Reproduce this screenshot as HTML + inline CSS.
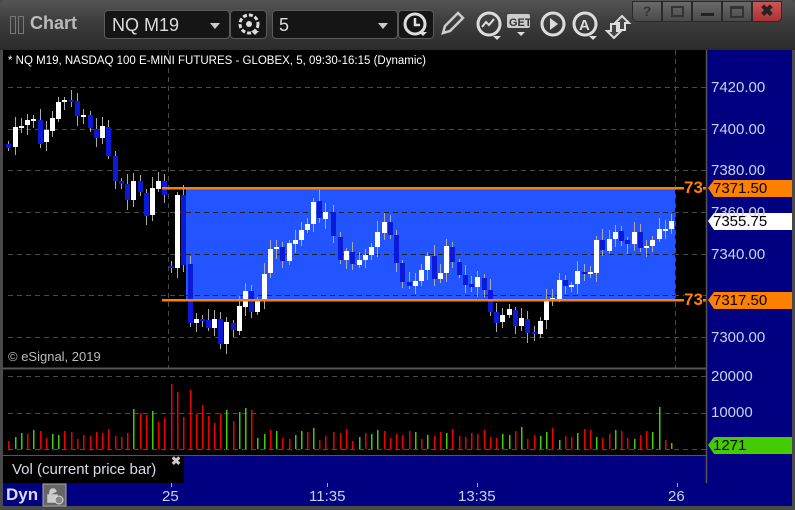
<!DOCTYPE html>
<html><head><meta charset="utf-8"><style>
*{margin:0;padding:0;box-sizing:border-box}
body{width:795px;height:510px;overflow:hidden;background:#4a4a4a;font-family:"Liberation Sans",sans-serif;position:relative}
.abs{position:absolute}
#title{left:0;top:0;width:795px;height:50px;background:linear-gradient(#555 0,#3e3e3e 20px,#2a2a2a 50px);border-radius:6px 6px 0 0}
.dd{background:#151515;border:1px solid #5a5a5a;border-radius:4px;color:#ddd;font-size:18px}
.wb{top:1px;height:21px;background:linear-gradient(#6a6a6a,#4a4a4a);border:1px solid #2a2a2a;color:#222;font-weight:bold;text-align:center;font-size:14px;line-height:19px}
.pl{color:#c9d2ec;font-size:15px;left:711px}
.tl{color:#c9d2ec;font-size:15px;top:488px}
</style></head><body>
<div id="title" class="abs"></div>
<div class="abs" style="left:10px;top:16px;width:6px;height:18px;border:1px solid #777"></div>
<div class="abs" style="left:18px;top:16px;width:6px;height:18px;border:1px solid #777"></div>
<div class="abs" style="left:30px;top:13px;color:#bbb;font-weight:bold;font-size:18px">Chart</div>
<div class="abs dd" style="left:104px;top:10px;width:126px;height:29px;padding:4px 0 0 7px">NQ M19<span style="position:absolute;right:9px;top:12px;border:5px solid transparent;border-top:6px solid #ccc"></span></div>
<div class="abs dd" style="left:230px;top:10px;width:37px;height:29px"><svg width="35" height="27"><circle cx="18" cy="13" r="9" fill="none" stroke="#ddd" stroke-width="3" stroke-dasharray="4 2"/><circle cx="18" cy="13" r="3" fill="#ddd"/><path d="M20 20h8l-4 4z" fill="#ddd"/></svg></div>
<div class="abs dd" style="left:272px;top:10px;width:126px;height:29px;padding:4px 0 0 6px">5<span style="position:absolute;right:9px;top:12px;border:5px solid transparent;border-top:6px solid #ccc"></span></div>
<div class="abs dd" style="left:398px;top:10px;width:36px;height:29px"><svg width="34" height="27"><circle cx="16" cy="13" r="10" fill="none" stroke="#ddd" stroke-width="3"/><path d="M16 7v7h5" fill="none" stroke="#ddd" stroke-width="2.5"/><path d="M20 21h8l-4 4z" fill="#ddd"/></svg></div>
<svg class="abs" style="left:436px;top:8px" width="200" height="34">
<path d="M7 25l2-7 13-13 5 5-13 13z" fill="none" stroke="#ccc" stroke-width="2.5"/>
<circle cx="53" cy="16" r="11" fill="none" stroke="#ddd" stroke-width="3"/><path d="M46 19l4-5 3 3 5-6" fill="none" stroke="#ddd" stroke-width="2"/><path d="M57 28h8l-4 4z" fill="#ddd"/>
<rect x="71" y="6" width="23" height="14" rx="2" fill="#ccc"/><text x="73" y="18" font-size="11" font-weight="bold" fill="#333" font-family="Liberation Sans">GET</text><path d="M81 24h8l-4 4z" fill="#ddd"/>
<circle cx="117" cy="16" r="11" fill="none" stroke="#ddd" stroke-width="3"/><path d="M114 10v12l8-6z" fill="#ddd"/>
<circle cx="149" cy="16" r="11" fill="none" stroke="#ddd" stroke-width="3"/><text x="143" y="22" font-size="15" font-weight="bold" fill="#ddd" font-family="Liberation Sans">A</text><path d="M153 28h8l-4 4z" fill="#ddd"/>
<path d="M178 30l-7-7h4v-7h6v7h4z M186 8l7 7h-4v7h-6v-7h-4z" fill="#444" stroke="#ddd" stroke-width="2"/>
</svg>
<div class="abs wb" style="left:632px;width:30px;border-radius:0 0 0 5px;color:#333">?</div>
<div class="abs wb" style="left:662px;width:30px"><div style="margin:4px auto;width:13px;height:11px;border:2px solid #333;border-top-width:2px"></div></div>
<div class="abs wb" style="left:692px;width:30px"><div style="margin:11px auto 0;width:13px;height:3px;background:#222"></div></div>
<div class="abs wb" style="left:722px;width:30px"><div style="margin:4px auto;width:14px;height:12px;border:2px solid #333;border-top-width:3px"></div></div>
<div class="abs wb" style="left:752px;width:30px;background:linear-gradient(#c55,#a33);border-radius:0 0 5px 0;font-size:16px">✖</div>

<div class="abs" style="left:3px;top:50px;width:703px;height:405px;background:#000"></div>
<div class="abs" style="left:706px;top:50px;width:86px;height:456px;background:#000080"></div>
<div class="abs" style="left:184px;top:455px;width:522px;height:28px;background:#000080"></div>
<div class="abs" style="left:3px;top:483px;width:789px;height:23px;background:#000080"></div>
<div class="abs" style="left:3px;top:455px;width:181px;height:28px;background:#000"></div>
<svg class="abs" style="left:0;top:0" width="795" height="510" id="sv">
<g stroke="#4a4a4a" stroke-dasharray="5 4" stroke-width="1">
<line x1="8" y1="87.5" x2="706" y2="87.5"/><line x1="8" y1="129.5" x2="706" y2="129.5"/><line x1="8" y1="170.5" x2="706" y2="170.5"/><line x1="8" y1="212.5" x2="706" y2="212.5"/><line x1="8" y1="254.5" x2="706" y2="254.5"/><line x1="8" y1="295.5" x2="706" y2="295.5"/><line x1="8" y1="337.5" x2="706" y2="337.5"/>
<line x1="8" y1="376.5" x2="706" y2="376.5"/><line x1="8" y1="413.5" x2="706" y2="413.5"/><line x1="8" y1="449.5" x2="706" y2="449.5"/>
<line x1="168.5" y1="50" x2="168.5" y2="368"/><line x1="675.5" y1="50" x2="675.5" y2="368"/>
</g>
<rect x="186" y="188" width="489" height="112" fill="#2255ff"/>
<g stroke="#222" stroke-dasharray="5 4"><line x1="186" y1="212.5" x2="675" y2="212.5"/><line x1="186" y1="254.5" x2="675" y2="254.5"/><line x1="186" y1="295.5" x2="675" y2="295.5"/></g>
<g id="cd"></g><g id="vb"></g>
<rect x="162" y="187" width="544" height="2.5" fill="#ff8000"/>
<rect x="162" y="299" width="544" height="2.5" fill="#ff8000"/>
<line x1="3" y1="368.5" x2="706" y2="368.5" stroke="#555" stroke-width="2"/>
<line x1="706.5" y1="50" x2="706.5" y2="483" stroke="#555" stroke-width="1.5"/>
<line x1="3" y1="455.5" x2="706" y2="455.5" stroke="#555"/>
<path d="M708 188l6-8h78v17h-78z" fill="#ff8000"/>
<path d="M708 221l6-8h78v17h-78z" fill="#fff"/>
<path d="M708 300l6-8h78v17h-78z" fill="#ff8000"/>
<path d="M708 445l6-8h78v17h-78z" fill="#44cc00"/>
<line x1="171.5" y1="483" x2="171.5" y2="487" stroke="#aaa"/><line x1="327.5" y1="483" x2="327.5" y2="487" stroke="#aaa"/><line x1="477.5" y1="483" x2="477.5" y2="487" stroke="#aaa"/><line x1="677.5" y1="483" x2="677.5" y2="487" stroke="#aaa"/>
<rect x="43" y="484" width="23" height="22" fill="#666" stroke="#aaa"/>
<path d="M48 502v-7h9v7z M50 495v-3a3 3 0 0 1 6 0" fill="#ccc" stroke="#ccc" stroke-width="1.5"/>
<circle cx="59" cy="500" r="4" fill="#888" stroke="#ddd"/>
</svg>
<div class="abs" style="left:8px;top:55px;color:#fff;font-size:11.5px">* NQ M19, NASDAQ 100 E-MINI FUTURES - GLOBEX, 5, 09:30-16:15 (Dynamic)</div>
<div class="abs" style="left:8px;top:349px;color:#bbb;font-size:13px">© eSignal, 2019</div>
<div class="abs pl" style="top:79px">7420.00</div>
<div class="abs pl" style="top:121px">7400.00</div>
<div class="abs pl" style="top:162px">7380.00</div>
<div class="abs pl" style="top:204px">7360.00</div>
<div class="abs pl" style="top:246px">7340.00</div>
<div class="abs pl" style="top:329px">7300.00</div>
<div class="abs pl" style="top:368px">20000</div>
<div class="abs pl" style="top:404px">10000</div>
<div class="abs" style="left:713px;top:180px;color:#000;font-size:15px">7371.50</div>
<div class="abs" style="left:713px;top:213px;color:#000;font-size:15px">7355.75</div>
<div class="abs" style="left:713px;top:292px;color:#000;font-size:15px">7317.50</div>
<div class="abs" style="left:713px;top:437px;color:#000;font-size:15px">1271</div>
<div class="abs" style="left:684px;top:179px;color:#ff8000;font-size:17px;font-weight:bold;background:#000;line-height:18px">73</div>
<div class="abs" style="left:684px;top:291px;color:#ff8000;font-size:17px;font-weight:bold;background:#000;line-height:18px">73</div>
<div class="abs" style="left:12px;top:461px;color:#d8dce8;font-size:15px">Vol (current price bar)</div>
<div class="abs" style="left:171px;top:454px;color:#ccc;font-size:12px;font-weight:bold">✖</div>
<div class="abs" style="left:6px;top:485px;color:#d8dce8;font-size:17px;font-weight:bold">Dyn</div>
<div class="abs tl" style="left:162px">25</div>
<div class="abs tl" style="left:309px">11:35</div>
<div class="abs tl" style="left:458px">13:35</div>
<div class="abs tl" style="left:668px">26</div>
<script>
var c=[[8,144,148,'b'],[15,127,147,'w'],[21,126,128,'w'],[27,120,125,'w'],[33,119,121,'w'],[40,120,144,'b'],[46,130,142,'w'],[52,118,131,'w'],[58,102,119,'w'],[64,100,102,'w'],[71,100,102,'b'],[77,101,116,'b'],[83,115,117,'w'],[90,115,128,'b'],[96,129,138,'b'],[102,126,138,'w'],[108,127,156,'b'],[115,156,181,'b'],[121,181,184,'b'],[127,184,200,'b'],[133,181,200,'w'],[140,181,192,'b'],[146,193,216,'b'],[152,188,215,'w'],[158,181,189,'w'],[164,181,195,'b'],[171,266,268,'b'],[177,195,268,'w'],[183,195,265,'b'],[190,264,323,'b'],[196,319,323,'w'],[202,319,321,'b'],[208,320,328,'b'],[214,319,328,'w'],[220,319,344,'b'],[226,322,344,'w'],[233,323,330,'b'],[239,306,331,'w'],[245,291,307,'w'],[251,291,312,'b'],[257,301,312,'w'],[264,274,301,'w'],[270,249,273,'w'],[276,247,249,'w'],[282,247,261,'b'],[289,243,261,'w'],[295,240,244,'w'],[301,230,240,'w'],[307,224,230,'w'],[313,202,224,'w'],[319,201,218,'b'],[325,212,219,'w'],[333,212,236,'b'],[340,237,260,'b'],[346,251,260,'w'],[352,252,264,'b'],[359,260,265,'w'],[365,255,260,'w'],[371,247,255,'w'],[377,232,247,'w'],[384,222,233,'w'],[390,222,235,'b'],[396,235,263,'b'],[402,263,282,'b'],[409,282,286,'b'],[415,281,286,'w'],[421,270,281,'w'],[427,256,270,'w'],[434,256,279,'b'],[440,273,279,'w'],[446,246,273,'w'],[452,247,262,'b'],[459,262,275,'b'],[465,275,285,'b'],[471,284,287,'b'],[477,277,287,'w'],[484,278,290,'b'],[490,290,312,'b'],[496,312,323,'b'],[502,315,322,'w'],[509,309,315,'w'],[515,310,326,'b'],[521,318,326,'w'],[527,319,333,'b'],[534,332,334,'b'],[540,321,334,'w'],[546,300,320,'w'],[552,298,300,'w'],[559,280,299,'w'],[565,280,286,'b'],[571,285,287,'w'],[577,271,284,'w'],[584,272,274,'b'],[590,272,274,'w'],[596,240,273,'w'],[602,240,250,'b'],[609,239,251,'w'],[615,232,239,'w'],[621,231,241,'b'],[627,240,244,'b'],[634,232,244,'w'],[640,232,248,'b'],[646,246,248,'w'],[652,240,246,'w'],[659,229,239,'w'],[665,229,231,'w'],[671,221,229,'w']];
var s='',v='';
for(var i=0;i<c.length;i++){var d=c[i],x=d[0],t=d[1],b=d[2];var wt=t-3-(i*7%9),wb=b+3+(i*5%8);
s+='<line x1="'+(x+.5)+'" y1="'+wt+'" x2="'+(x+.5)+'" y2="'+wb+'" stroke="#aaa"/>';
s+='<rect x="'+(x-2)+'" y="'+t+'" width="5" height="'+Math.max(2,b-t)+'" fill="'+(d[3]=='w'?'#fff':'#0a1ad8')+'"/>';
var h=8+(i*13%11)+(i*7%5);
if(i>20&&i<40)h+=12+(i*5%20);if(i==26)h=65;if(i==27)h=57;if(i==29)h=59;if(i==20)h=40;if(i==104)h=42;if(i>24&&i<32&&h<25)h+=10;if(i>105)h=6;
var vc=(i%3==0||d[3]=='b')?'#ee0000':'#44cc00';
v+='<rect x="'+x+'" y="'+(449-h)+'" width="1.5" height="'+h+'" fill="'+vc+'"/>';}
document.getElementById('cd').innerHTML=s;document.getElementById('vb').innerHTML=v;
</script>
</body></html>
